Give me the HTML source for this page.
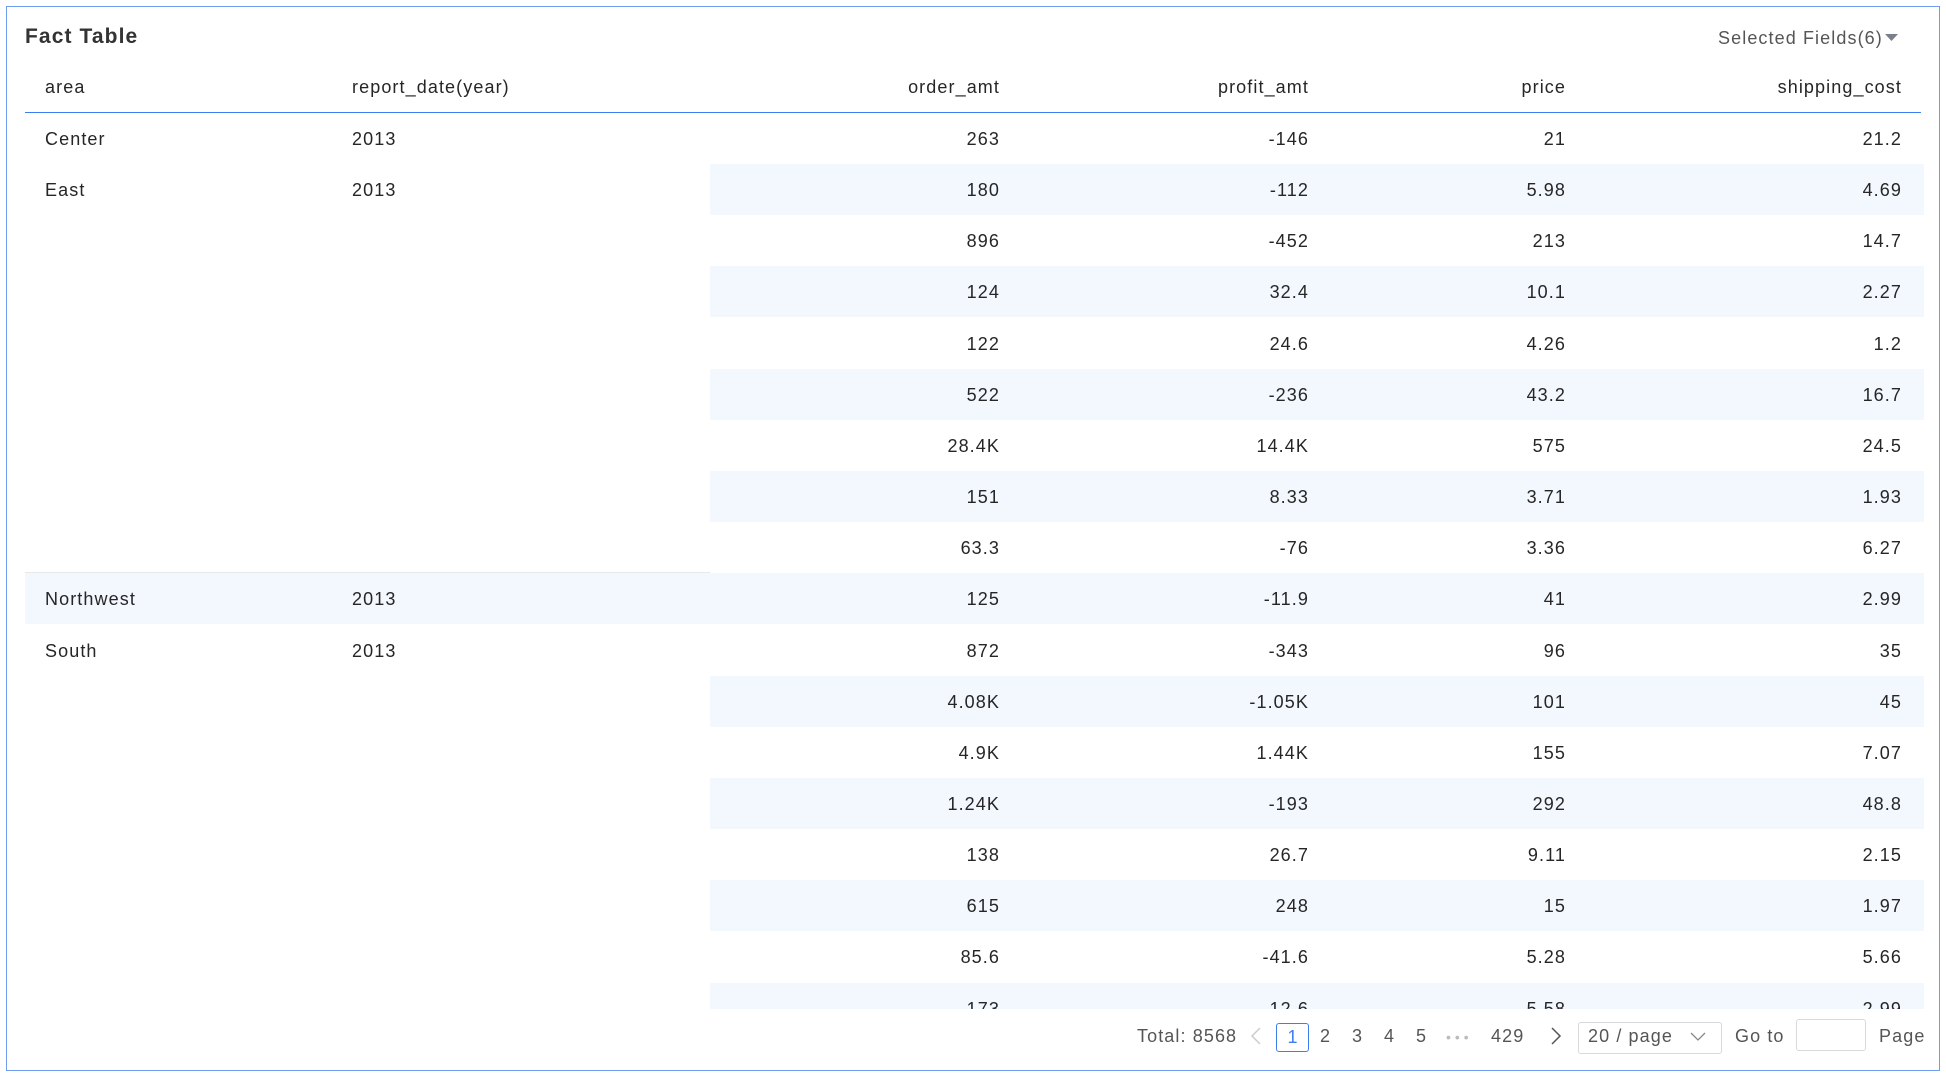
<!DOCTYPE html>
<html><head><meta charset="utf-8"><style>
*{margin:0;padding:0;box-sizing:border-box}
body{width:1946px;height:1076px;background:#fff;font-family:"Liberation Sans",sans-serif;color:#262626;position:relative;overflow:hidden;letter-spacing:1.1px}
.frame{position:absolute;left:6px;top:6px;width:1934px;height:1065px;border:1px solid #6f9cf0}
.a{position:absolute;white-space:nowrap;font-size:18px;line-height:22px}
.r{text-align:right}
.sh{position:absolute;height:51px;background:#f3f7fe}
.body{position:absolute;left:25px;top:113px;width:1899px;height:896px;overflow:hidden}
.pg{position:absolute;font-size:18px;line-height:22px;color:#555;top:1025px;white-space:nowrap}
</style></head><body>
<div class="frame"></div>
<div class="a" style="left:25px;top:25px;font-size:21px;line-height:24px;font-weight:bold;color:#333">Fact Table</div>
<div class="a" style="left:1718px;top:27px;color:#555">Selected Fields(6)</div>
<svg style="position:absolute;left:1885px;top:34px" width="13" height="8"><path d="M0 0H13L6.5 7Z" fill="#7a7f8c"/></svg>
<div class="a" style="left:45px;top:76px">area</div>
<div class="a" style="left:352px;top:76px">report_date(year)</div>
<div class="a r" style="left:800px;width:200px;top:76px">order_amt</div>
<div class="a r" style="left:1100px;width:209px;top:76px">profit_amt</div>
<div class="a r" style="left:1400px;width:166px;top:76px">price</div>
<div class="a r" style="left:1700px;width:202px;top:76px">shipping_cost</div>
<div style="position:absolute;left:25px;top:112px;width:1896px;height:1px;background:#3d7ff0"></div>
<div class="body" id="b"></div>
<script>
var d=[["Center","2013","263","-146","21","21.2"],["East","2013","180","-112","5.98","4.69"],["","","896","-452","213","14.7"],["","","124","32.4","10.1","2.27"],["","","122","24.6","4.26","1.2"],["","","522","-236","43.2","16.7"],["","","28.4K","14.4K","575","24.5"],["","","151","8.33","3.71","1.93"],["","","63.3","-76","3.36","6.27"],["Northwest","2013","125","-11.9","41","2.99"],["South","2013","872","-343","96","35"],["","","4.08K","-1.05K","101","45"],["","","4.9K","1.44K","155","7.07"],["","","1.24K","-193","292","48.8"],["","","138","26.7","9.11","2.15"],["","","615","248","15","1.97"],["","","85.6","-41.6","5.28","5.66"],["","","173","12.6","5.58","2.99"]];
var h="",H=51.15;
d.forEach(function(r,i){var t=i*H;
if(i%2==1){var l=(i==9)?0:685;h+='<div class="sh" style="left:'+l+'px;width:'+(1899-l)+'px;top:'+t+'px"></div>';}
var ty=t+15;
if(r[0])h+='<div class="a" style="left:20px;top:'+ty+'px">'+r[0]+'</div><div class="a" style="left:327px;top:'+ty+'px">'+r[1]+'</div>';
var rt=[975,1284,1541,1877];
for(var k=0;k<4;k++)h+='<div class="a r" style="left:'+(rt[k]-200)+'px;width:200px;top:'+ty+'px">'+r[k+2]+'</div>';
});
h+='<div style="position:absolute;left:0;top:'+(9*H-1)+'px;width:685px;height:1px;background:#e8e8e8"></div>';
document.getElementById("b").innerHTML=h;
</script>
<div class="pg" style="left:1137px">Total: 8568</div>
<svg style="position:absolute;left:1250px;top:1027px" width="12" height="18"><path d="M10 1L2 9L10 17" fill="none" stroke="#ccc" stroke-width="1.5"/></svg>
<div style="position:absolute;left:1276px;top:1023px;width:33px;height:29px;border:1px solid #3d7ff0;border-radius:3px;color:#3d7ff0;font-size:18px;line-height:27px;text-align:center;letter-spacing:0">1</div>
<div class="pg" style="left:1320px">2</div>
<div class="pg" style="left:1352px">3</div>
<div class="pg" style="left:1384px">4</div>
<div class="pg" style="left:1416px">5</div>
<div class="pg" style="left:1446px;color:#bbb;font-size:14px;letter-spacing:4px;top:1026px">•••</div>
<div class="pg" style="left:1491px">429</div>
<svg style="position:absolute;left:1550px;top:1027px" width="12" height="18"><path d="M2 1L10 9L2 17" fill="none" stroke="#555" stroke-width="1.5"/></svg>
<div style="position:absolute;left:1578px;top:1022px;width:144px;height:32px;border:1px solid #d9d9d9;border-radius:3px"></div>
<div class="pg" style="left:1588px">20 / page</div>
<svg style="position:absolute;left:1690px;top:1032px" width="16" height="10"><path d="M1 1L8 8L15 1" fill="none" stroke="#888" stroke-width="1.3"/></svg>
<div class="pg" style="left:1735px">Go to</div>
<div style="position:absolute;left:1796px;top:1019px;width:70px;height:32px;border:1px solid #d9d9d9;border-radius:3px"></div>
<div class="pg" style="left:1879px">Page</div>
</body></html>
